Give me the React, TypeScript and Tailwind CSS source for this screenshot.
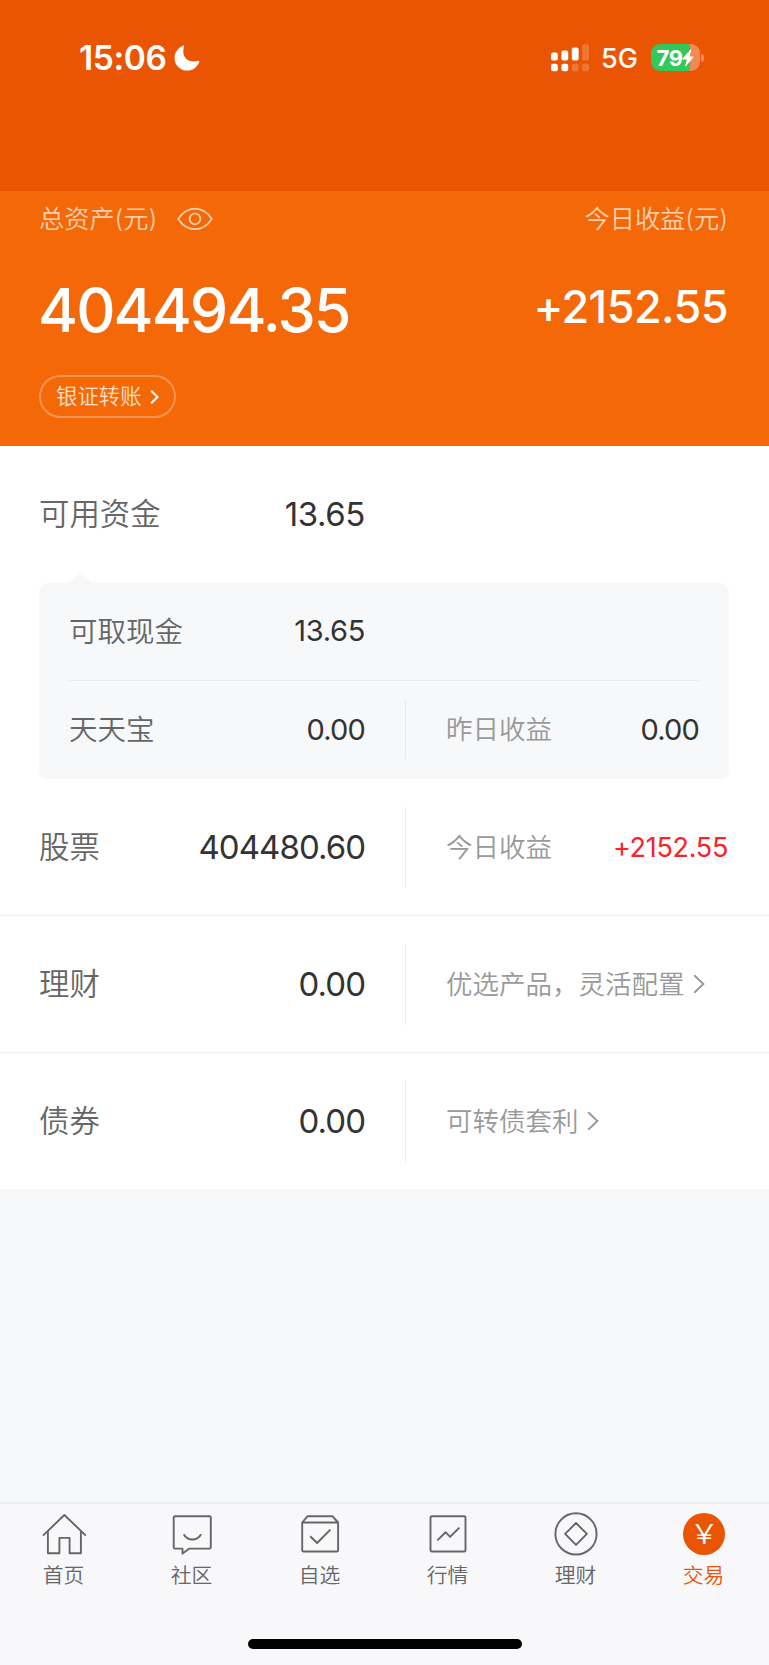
import { ReactNode } from 'react';
import clsx from 'clsx';

type IconProps = { className?: string };

const MoonIcon = ({ className }: IconProps) => (
  <svg className={className} viewBox="0 0 26 26" fill="currentColor">
    <path d="M9.2.6c.6-.4 1.2.1 1 .7C9.500 3.100 9.300 4.700 9.300 6.300c0 6.400 4.200 10.300 10.400 10.300 1.700 0 3.200-.3 4.500-.8.800-.3 1.400.3 1.100 1C23.500 22.100 18.800 25.600 13.200 25.600 6.100 25.600.600 20.200.600 13.200.600 7.500 4 2.700 9.200.6Z" />
  </svg>
);

const SignalIcon = ({ className }: IconProps) => (
  <svg className={className} viewBox="0 0 38 28" fill="currentColor">
    <rect x="0" y="8.500" width="6.800" height="8" rx="2" />
    <rect x="10.400" y="6.500" width="6.800" height="10" rx="2" />
    <rect x="20.800" y="3.500" width="6.800" height="13" rx="2" />
    <rect x="31.200" y="0.300" width="6.800" height="16.200" rx="2" opacity="0.200" />
    <rect x="0" y="19.700" width="6.800" height="7.600" rx="2" />
    <rect x="10.400" y="19.700" width="6.800" height="7.600" rx="2" />
    <rect x="20.800" y="19.700" width="6.800" height="7.600" rx="2" opacity="0.200" />
    <rect x="31.200" y="19.700" width="6.800" height="7.600" rx="2" opacity="0.200" />
  </svg>
);

const BoltIcon = ({ className }: IconProps) => (
  <svg className={className} viewBox="0 0 12 18" fill="currentColor">
    <path d="M8.400.700.600 9.600c-.3.400-.1.800.3.800h3.900L3.200 16.400c-.2.700.4 1 .9.500l7.400-8.700c.3-.4.1-.8-.3-.8H7.500L9.300 1.200C9.500.500 8.900.200 8.400.700Z" />
  </svg>
);

const EyeIcon = ({ className }: IconProps) => (
  <svg className={className} viewBox="0 0 36 24" fill="none" stroke="currentColor" strokeWidth="1.700">
    <path d="M1.200 12C5.500 5.300 11.200 1.600 18 1.600S30.500 5.300 34.800 12C30.500 18.700 24.800 22.200 18 22.200S5.500 18.700 1.200 12Z" />
    <circle cx="18" cy="11.900" r="5.400" />
  </svg>
);

const ChevronIcon = ({ className }: IconProps) => (
  <svg className={className} viewBox="0 0 12 20" fill="none" stroke="currentColor" strokeWidth="1.900">
    <path d="M1.200 1.200 10.400 10l-9.200 8.800" />
  </svg>
);

const TabIcon = ({ children }: { children: ReactNode }) => (
  <svg
    className="h-11 w-11"
    viewBox="0 0 44 44"
    fill="none"
    stroke="currentColor"
    strokeWidth="1.900"
    strokeLinejoin="round"
  >
    {children}
  </svg>
);

const tabs = [
  {
    label: '首页',
    icon: (
      <TabIcon>
        <path d="M.9 23.600 22.400 3l21.400 20.600" />
        <path d="M5.900 19v22.300h11.500V25.900h10.200v15.400h11.300V19" />
      </TabIcon>
    ),
  },
  {
    label: '社区',
    icon: (
      <TabIcon>
        <path d="M5 4.300h34.500a1.300 1.300 0 0 1 1.300 1.300v29.700a1.300 1.300 0 0 1-1.300 1.300H19.400l-6.900 5v-5H5a1.300 1.300 0 0 1-1.300-1.300V5.600A1.300 1.300 0 0 1 5 4.300Z" />
        <path d="M13.700 22.300c3.800 7 13.600 7 17.400 0" />
      </TabIcon>
    ),
  },
  {
    label: '自选',
    icon: (
      <TabIcon>
        <path d="M4.200 10.500 9.400 4.300h25.200l5.500 6.200v27.700a1.300 1.300 0 0 1-1.300 1.300H5.500a1.300 1.300 0 0 1-1.300-1.300ZM4.200 10.500h35.900" />
        <path d="m12.200 24.200 6.900 6.800L32.400 17.700" />
      </TabIcon>
    ),
  },
  {
    label: '行情',
    icon: (
      <TabIcon>
        <rect x="4.500" y="4.300" width="35" height="35.200" rx="1.300" />
        <path d="m11.300 28.400 8.300-8.200 4.500 4.700 9.300-9.300" />
      </TabIcon>
    ),
  },
  {
    label: '理财',
    icon: (
      <TabIcon>
        <circle cx="22" cy="21.900" r="20.600" />
        <path d="m22 11 10.900 10.900L22 32.800 11.100 21.900Z" />
      </TabIcon>
    ),
  },
  {
    label: '交易',
    active: true,
    icon: (
      <span className="flex h-11 w-11 items-center justify-center">
        <span className="flex h-[42px] w-[42px] items-center justify-center rounded-full bg-[#ea5504] text-[27px] leading-none text-white">
          <span className="scale-x-130">¥</span>
        </span>
      </span>
    ),
  },
];

const StatusBar = () => (
  <div className="flex h-[191px] items-start justify-between bg-[#ea5504] pt-[37px] pr-[65px] pl-[79px] text-white">
    <div className="flex h-[41px] items-center">
      <span className="w-[95px] pt-[2px] text-[33.500px] font-semibold tracking-[-0.400px]">15:06</span>
      <MoonIcon className="h-[26px] w-[26px]" />
    </div>
    <div className="flex h-[41px] items-center">
      <SignalIcon className="h-7 w-[38px]" />
      <span className="ml-3 w-[50px] pt-[2px] text-[27px] font-medium">5G</span>
      <div className="flex h-[27px] w-[49px] items-center justify-center rounded-[9px] bg-[linear-gradient(90deg,#34c759_79%,#f28a55_79%)]">
        <span className="text-[22px] font-bold tracking-[-0.500px]">79</span>
        <BoltIcon className="h-[18px] w-3" />
      </div>
      <div className="ml-px h-2 w-[3px] rounded-r-full bg-[#f28a55]" />
    </div>
  </div>
);

const Summary = () => (
  <section className="flex h-[255px] flex-col bg-[#f56808] pr-[41px] pl-[39px] text-white">
    <div className="flex h-14 items-center justify-between text-[25.200px] text-[#fdd0b0]">
      <div className="flex items-center">
        <span className="w-[138px] pt-px">总资产(元)</span>
        <EyeIcon className="h-6 w-9" />
      </div>
      <span className="pt-px">今日收益(元)</span>
    </div>
    <div className="flex h-[126px] items-center justify-between">
      <span className="-ml-px text-[61px] font-medium tracking-[-1.900px]">404494.35</span>
      <span className="pb-[7px] text-[45px] font-medium tracking-[-0.600px]">+2152.55</span>
    </div>
    <button className="mt-[2px] flex h-[43px] w-[137px] items-center rounded-full border-2 border-[#f89553] pl-[15px] text-[21.400px] text-[#fee1ce]">
      银证转账
      <ChevronIcon className="ml-2 h-[14px] w-[9px] text-white [stroke-width:3]" />
    </button>
  </section>
);

type RowProps = {
  label: string;
  value: string;
  className: string;
  children?: ReactNode;
};

const AssetRow = ({ label, value, className, children }: RowProps) => (
  <div className={clsx('flex items-center pr-[41px] pl-[39px]', className)}>
    <div className="flex w-[326px] items-center justify-between">
      <span className="text-[30.400px] text-[#666]">{label}</span>
      <span className="text-[33px] font-normal tracking-[-0.960px] text-[#333]">{value}</span>
    </div>
    <div className="ml-10 flex h-[81px] flex-1 items-center border-l border-[#ededed] pl-10 text-[26.500px] text-[#999]">
      {children}
    </div>
  </div>
);

const CashCard = () => (
  <div className="relative mr-10 ml-[39px] h-[196px] rounded-[9px] bg-[#f7f8fa] px-[30px]">
    <div className="absolute -top-2 left-[33px] h-[17px] w-[17px] rotate-45 bg-[#f7f8fa]" />
    <div className="flex h-[98px] items-center border-b border-[#ebecee]">
      <div className="flex w-[296px] items-center justify-between">
        <span className="pt-px text-[28.500px] text-[#666]">可取现金</span>
        <span className="pb-[2px] text-[29px] font-normal tracking-[-0.300px] text-[#333]">13.65</span>
      </div>
    </div>
    <div className="flex h-[97px] items-center">
      <div className="flex w-[296px] items-center justify-between">
        <span className="pt-px text-[28.500px] text-[#666]">天天宝</span>
        <span className="text-[29px] font-normal tracking-[-0.800px] text-[#333]">0.00</span>
      </div>
      <div className="ml-10 flex h-[59px] flex-1 items-center justify-between border-l border-[#e8e9eb] pl-10">
        <span className="text-[26.500px] text-[#999]">昨日收益</span>
        <span className="text-[29px] font-normal tracking-[-0.800px] text-[#333]">0.00</span>
      </div>
    </div>
  </div>
);

const TabBar = () => (
  <nav className="mt-auto flex h-[163px] flex-col border-t-2 border-[#ebecee] bg-[#f8f8fb]">
    <div className="mr-px flex pt-2">
      {tabs.map(({ label, icon, active }) => (
        <div
          key={label}
          className={clsx('flex flex-1 flex-col items-center', active ? 'text-[#ea5504]' : 'text-[#666]')}
        >
          {icon}
          <span className="mt-[5px] mr-px text-[20.800px] leading-[30px]">{label}</span>
        </div>
      ))}
    </div>
    <div className="mx-auto mt-auto mb-4 h-[10px] w-[274px] rounded-full bg-black" />
  </nav>
);

export default function App() {
  return (
    <main className="flex h-[1665px] w-[769px] flex-col overflow-hidden bg-[#f7f8fa] font-['Inter','Noto_Sans_CJK_SC',sans-serif] leading-none font-[350]">
      <StatusBar />
      <Summary />
      <section className="bg-white">
        <div className="flex h-[137px] items-center pl-[39px]">
          <div className="flex w-[326px] items-center justify-between">
            <span className="text-[30.400px] text-[#666]">可用资金</span>
            <span className="text-[33px] font-normal tracking-[-0.400px] text-[#333]">13.65</span>
          </div>
        </div>
        <CashCard />
        <AssetRow className="h-[137px] border-b border-[#f0f0f0]" label="股票" value="404480.60">
          <span>今日收益</span>
          <span className="ml-auto text-[27px] font-normal tracking-[-0.300px] text-[#fa2327]">+2152.55</span>
        </AssetRow>
        <AssetRow className="h-[137px] border-b border-[#f0f0f0]" label="理财" value="0.00">
          <span>优选产品，灵活配置</span>
          <ChevronIcon className="ml-2 h-5 w-3" />
        </AssetRow>
        <AssetRow className="h-[136px]" label="债券" value="0.00">
          <span>可转债套利</span>
          <ChevronIcon className="ml-2 h-5 w-3" />
        </AssetRow>
      </section>
      <TabBar />
    </main>
  );
}
